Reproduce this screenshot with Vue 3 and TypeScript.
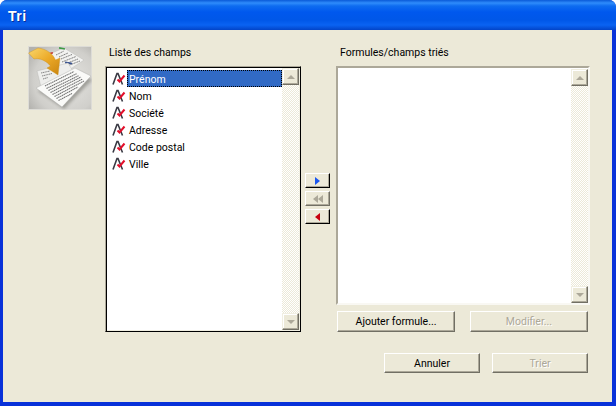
<script setup lang="ts">
const fields: string[] = ['Prénom', 'Nom', 'Société', 'Adresse', 'Code postal', 'Ville']
const frontLines: string[] = [
  'M17 40 L46 25.5', 'M18.5 42.5 L49 27.5', 'M20.5 44.5 L51 29.5', 'M22.5 46.5 L53 31',
  'M24.5 48.5 L54.5 33', 'M26.5 50.5 L56 35', 'M28.5 52.5 L50 41', 'M30.5 54.5 L44 47.5',
]
const backLines: string[] = [
  'M28 9 L36 5', 'M31 11 L40 7', 'M33 13 L44 8.5', 'M34 16 L48 10.5', 'M37 18 L50 13', 'M39 20 L52 15',
]
</script>

<template>
  <div class="window">
    <header class="titlebar"><span class="title">Tri</span></header>
    <main class="client">
      <div class="picture">
        <svg width="64" height="64" viewBox="0 0 64 64">
          <defs>
            <radialGradient id="plate" cx="0.6" cy="0.55" r="0.75">
              <stop offset="0" stop-color="#e6e5e1" />
              <stop offset="0.7" stop-color="#d0cfcb" />
              <stop offset="1" stop-color="#b2b1ad" />
            </radialGradient>
            <linearGradient id="gold" x1="0" y1="0" x2="1" y2="1">
              <stop offset="0" stop-color="#f9d76c" />
              <stop offset="0.5" stop-color="#ecaa28" />
              <stop offset="1" stop-color="#c9840f" />
            </linearGradient>
            <filter id="soft" x="-10%" y="-10%" width="120%" height="120%">
              <feGaussianBlur stdDeviation="1.4" />
            </filter>
          </defs>
          <rect width="64" height="64" fill="#dddcd7" />
          <rect x="1" y="1" width="62" height="62" fill="url(#plate)" />
          <path d="M19 9 L36 2 L56 14 L38 26 Z" fill="#f2f2f0" stroke="#b4b4b1" stroke-width=".4" />
          <g stroke="#7d7d7d" stroke-width="1" stroke-dasharray="1.3 .5" fill="none">
            <path v-for="d in backLines" :key="d" :d="d" />
          </g>
          <rect x="31" y="1.6" width="6" height="1.6" fill="#3f9a46" transform="rotate(10 34 2.4)" />
          <rect x="19" y="6.8" width="6" height="1.6" fill="#c8342c" transform="rotate(-15 22 7.6)" />
          <rect x="37" y="16" width="7" height="1.6" fill="#36508f" transform="rotate(12 40 17)" />
          <path d="M9 25 L40 17 L48 30 L13 41 Z" fill="#eeeeec" stroke="#b0b0ad" stroke-width=".4" />
          <g stroke="#858585" stroke-width="1" stroke-dasharray="1.3 .5" fill="none">
            <path d="M13 27 L22 25" /><path d="M14 30 L24 27.5" /><path d="M15 33 L20 31.5" />
          </g>
          <path d="M10 45 L49 25 L64 34 L36 63 Z" fill="#45453d" opacity=".38" filter="url(#soft)" />
          <path d="M8 42 L47 22 L63 30 L34 61 Z" fill="#fafaf8" stroke="#a5a5a2" stroke-width=".4" />
          <g stroke="#737373" stroke-width="1.1" stroke-dasharray="1.5 .5" fill="none">
            <path v-for="d in frontLines" :key="d" :d="d" />
          </g>
          <path d="M0.5 7 L10 2 C19 3 25 8 27.5 14 L32 12 L30 29 L19 22 L22.5 20 C19 15.5 12 11.5 6 13 Z" fill="url(#gold)" stroke="#c98f1f" stroke-width=".4" />
        </svg>
      </div>

      <section class="left-col">
        <label class="caption">Liste des champs</label>
        <div class="listbox listbox-black">
          <ul class="items">
            <li v-for="(f, i) in fields" :key="f" class="item">
              <svg class="field-icon" width="14" height="14" viewBox="0 0 14 14">
                <path d="M1 12.5 L5 1.5 L6 1.5 L10.5 12.5" fill="none" stroke="#3a3a44" stroke-width="1.6" />
                <path d="M5.5 7.5 L7.5 9.5 L12.5 3.5" fill="none" stroke="#e3102c" stroke-width="2" />
              </svg>
              <span class="item-text" :class="{ selected: i === 0 }">{{ f }}</span>
            </li>
          </ul>
          <div class="scrollbar">
            <span class="sb-btn"><i class="tri up"></i></span>
            <span class="sb-btn"><i class="tri down"></i></span>
          </div>
        </div>
      </section>

      <section class="mid-col">
        <button class="btn arrow-btn"><i class="arr right-blue"></i></button>
        <button class="btn arrow-btn dim"><i class="arr left-gray"></i><i class="arr left-gray"></i></button>
        <button class="btn arrow-btn"><i class="arr left-red"></i></button>
      </section>

      <section class="right-col">
        <label class="caption">Formules/champs triés</label>
        <div class="listbox listbox-sunken">
          <div class="items"></div>
          <div class="scrollbar">
            <span class="sb-btn"><i class="tri up"></i></span>
            <span class="sb-btn"><i class="tri down"></i></span>
          </div>
        </div>
        <div class="row row-form">
          <button class="btn wide">Ajouter formule...</button>
          <button class="btn wide" disabled>Modifier...</button>
        </div>
        <div class="row row-dialog">
          <button class="btn action">Annuler</button>
          <button class="btn action" disabled>Trier</button>
        </div>
      </section>
    </main>
  </div>
</template>

<style>
html, body { margin: 0; padding: 0; overflow: hidden; }
</style>

<style scoped>
.window {
  width: 616px;
  height: 406px;
  box-sizing: border-box;
  display: flex;
  flex-direction: column;
  font: 10.5px Roboto, "Liberation Sans", Arial, sans-serif;
  color: #000;
  border-radius: 7px 7px 0 0;
  overflow: hidden;
  background: #0831d9;
  border-bottom: 4px solid #0831d9;
}
.titlebar {
  height: 30px;
  flex: none;
  box-sizing: border-box;
  padding: 8px 0 0 8px;
  background: linear-gradient(180deg, #0a5ad8 0, #2f8cfb 3px, #0e6cf0 6px, #0058ee 12px, #0057e8 20px, #0a63f2 25px, #0244c8 30px);
}
.title {
  font: 700 14px "Liberation Sans", Arial, sans-serif;
  color: #fff;
  letter-spacing: 0.5px;
  text-shadow: 1px 1px 0 #0a2f9c;
}
.client {
  flex: 1;
  margin: 0 4px 0 3px;
  background: #ece9d8;
  display: flex;
  align-items: flex-start;
  padding: 16px 0 0 25px;
  min-height: 0;
}
.picture { width: 64px; height: 64px; flex: none; margin: 0 13px 0 0; }
.picture svg { display: block; }
.caption { display: block; line-height: 14px; padding-left: 4px; margin-bottom: 6px; }
.left-col { width: 196px; flex: none; }
.listbox { display: flex; box-sizing: border-box; background: #fff; }
.listbox-black {
  height: 266px;
  border: 1px solid;
  border-color: #aca899 #000 #000 #aca899;
  padding: 1px;
  box-shadow: inset 1px 1px 0 #000, inset -1px -1px 0 #f1efe2;
}
.listbox-sunken {
  height: 239px;
  width: 254px;
  border: 2px solid;
  border-color: #aca899 #f9f8f3 #f9f8f3 #aca899;
  padding: 1px 0 0 1px;
  margin-top: 1px;
}
.items { flex: 1; list-style: none; margin: 0; padding: 2px 0 0 5px; min-width: 0; }
.item { height: 17px; display: flex; align-items: center; }
.field-icon { flex: none; margin-right: 1px; }
.item-text { height: 17px; line-height: 20px; flex: 1; padding-left: 2px; box-sizing: border-box; }
.item-text.selected { background: #316ac5; color: #fff; outline: 1px dotted #000; outline-offset: -1px; }
.scrollbar {
  width: 17px;
  flex: none;
  display: flex;
  flex-direction: column;
  justify-content: space-between;
  background: repeating-conic-gradient(#ece9d8 0 25%, #fff 0 50%) 0 0 / 2px 2px;
}
.sb-btn {
  width: 17px;
  height: 17px;
  box-sizing: border-box;
  background: #ece9d8;
  border: 1px solid;
  border-color: #f1efe2 #716f64 #716f64 #f1efe2;
  box-shadow: inset -1px -1px 0 #aca899, inset 1px 1px 0 #fff;
  display: flex;
  align-items: center;
  justify-content: center;
}
.tri { width: 0; height: 0; border-left: 4px solid transparent; border-right: 4px solid transparent; }
.tri.up { border-bottom: 4px solid #aca899; }
.tri.down { border-top: 4px solid #aca899; }
.mid-col {
  width: 25px;
  flex: none;
  margin-left: 4px;
  padding-top: 127px;
  display: flex;
  flex-direction: column;
  gap: 3px;
}
.right-col { flex: none; width: 254px; margin-left: 6px; }
.row { display: flex; justify-content: flex-end; padding-right: 2px; }
.row-form { gap: 15px; margin-top: 6px; }
.row-dialog { gap: 12px; margin-top: 21px; }
.btn {
  box-sizing: border-box;
  background: #ece9d8;
  border: 1px solid;
  border-color: #fff #716f64 #716f64 #fff;
  box-shadow: inset -1px -1px 0 #aca899;
  font: inherit;
  color: #000;
  padding: 0;
  display: flex;
  align-items: center;
  justify-content: center;
}
.btn:disabled { color: #aca899; text-shadow: 1px 1px 0 #fff; }
.wide { width: 118px; height: 21px; }
.action { width: 96px; height: 20px; }
.arrow-btn { width: 25px; height: 15px; border-color: #fff #000 #000 #fff; }
.arrow-btn.dim { border-color: #fff #716f64 #716f64 #fff; }
.arr { width: 0; height: 0; border-top: 4px solid transparent; border-bottom: 4px solid transparent; }
.right-blue { border-left: 5px solid #1a56f0; }
.left-gray { border-right: 5px solid #aca899; }
.left-red { border-right: 5px solid #c8000f; }
</style>
